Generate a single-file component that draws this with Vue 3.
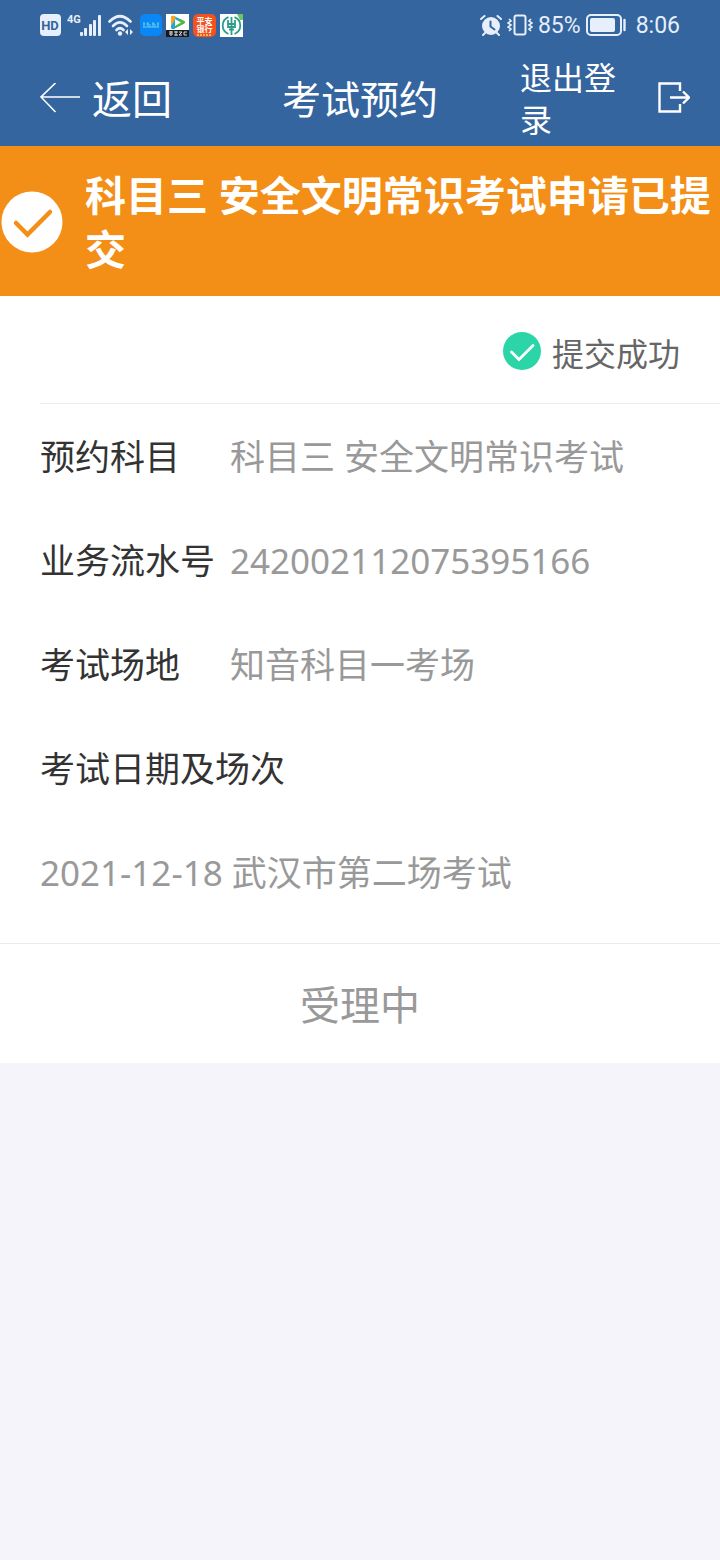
<template>
  <div class="page">
    <header class="top">
      <div class="status-bar">
        <div class="status-left">
          <svg class="hd" width="21" height="22" viewBox="0 0 21 22">
            <rect width="21" height="22" rx="4" fill="#e6effb" />
            <text x="10" y="16" text-anchor="middle" font-size="13" font-weight="700" fill="#34659f">HD</text>
          </svg>
          <svg width="35" height="24" viewBox="0 0 35 24">
            <text x="0" y="10" font-size="11" font-weight="700" fill="#e6effb">4G</text>
            <g fill="#e6effb">
              <rect x="13" y="19" width="3" height="4" rx="1" />
              <rect x="17" y="15" width="3" height="8" rx="1" />
              <rect x="22" y="11" width="3" height="12" rx="1" />
              <rect x="26" y="7" width="3" height="16" rx="1" />
              <rect x="31" y="2" width="3" height="21" rx="1" />
            </g>
          </svg>
          <svg width="26" height="24" viewBox="0 0 26 24">
            <g fill="none" stroke="#e6effb" stroke-width="2.6" stroke-linecap="round">
              <path d="M1.500 8.500Q12 -2 22.500 8.500" />
              <path d="M5 13Q12 6 19 13" />
              <path d="M8.500 17Q12 13.500 15.500 17" />
            </g>
            <circle cx="12" cy="20.500" r="2.200" fill="#e6effb" />
            <path d="M20 16v6l-3-3zM22 16v6l3-3z" fill="#e6effb" />
          </svg>
          <div class="apps">
            <svg width="22" height="22" viewBox="0 0 22 22">
              <rect width="22" height="22" rx="5" fill="#0b86f5" />
              <path d="M3 10h2m1 0h3m3 0h3m2 0h2M4 8v5m4-5v5m2-3v3m3-5v5m2-3v3m3-5v5M3 13h16" fill="none" stroke="#5fd0e6" stroke-width="1" />
            </svg>
            <svg width="23" height="23" viewBox="0 0 23 23">
              <rect width="23" height="23" fill="#fff" />
              <path d="M5 4Q5 1 8 2L18 7Q20 8 18 9.500L8 15Q5 16 5 13z" fill="#19a5e8" />
              <path d="M5 4Q5 1 8 2L10 3 7 9 5 12z" fill="#f7a51b" />
              <path d="M7 15L18 9.500Q20 8 18 7L14 5z" fill="#55b830" />
              <path d="M9 5l6 3.500-6 3.500z" fill="#fff" />
              <rect y="16" width="23" height="7" fill="#17191f" />
              <path d="M3 18h4M3 20h4M5 17v5M8 18h4M8 21h4M10 17v5M13 18h3l-3 3h3M18 18h3M18 21h3M18 18v3" fill="none" stroke="#d9d9d9" stroke-width="1" />
            </svg>
            <svg width="23" height="23" viewBox="0 0 23 23">
              <rect width="23" height="23" rx="5" fill="#f4511e" />
              <text x="11.500" y="10" text-anchor="middle" font-size="8" font-weight="700" fill="#fff">平安</text>
              <text x="11.500" y="18" text-anchor="middle" font-size="8" font-weight="700" fill="#fff">银行</text>
              <path d="M4 21h15" stroke="#ffb347" stroke-width="2" stroke-dasharray="2 1" />
            </svg>
            <svg width="23" height="23" viewBox="0 0 23 23">
              <rect width="23" height="23" fill="#fff" />
              <g fill="none" stroke="#2f9c8b" stroke-width="1.800">
                <path d="M8.500 20A9 9 0 0 1 8.500 3.200M14.500 3.200A9 9 0 0 1 14.500 20" />
                <path d="M11.500 3v18M8 6v7h7V6M8 10h7M9 15.500h5" />
              </g>
              <path d="M17 0h6v6h-3z" fill="#67c85e" />
            </svg>
          </div>
        </div>
        <div class="status-right">
          <svg width="22" height="22" viewBox="0 0 22 22">
            <circle cx="11" cy="12" r="9" fill="#e6effb" />
            <path d="M1 5L4.500 2M21 5L17.500 2M5 19l-2 2M17 19l2 2" stroke="#e6effb" stroke-width="2" stroke-linecap="round" />
            <path d="M10.500 7.500v5l4 3" fill="none" stroke="#34659f" stroke-width="2" stroke-linecap="round" />
          </svg>
          <svg width="26" height="22" viewBox="0 0 26 22">
            <rect x="7.500" y="1.500" width="11" height="19" rx="2" fill="none" stroke="#e6effb" stroke-width="2" />
            <path d="M2 5l2 2-3 2 3 2-3 2 3 2-2 2M24 5l-2 2 3 2-3 2 3 2-3 2 2 2" fill="none" stroke="#e6effb" stroke-width="1.600" />
          </svg>
          <span>85%</span>
          <svg width="41" height="22" viewBox="0 0 41 22">
            <rect x="1" y="1" width="34" height="20" rx="4" fill="none" stroke="#e6effb" stroke-width="2" />
            <rect x="4" y="4" width="25" height="14" rx="2" fill="#e6effb" />
            <path d="M38.500 6v10" stroke="#e6effb" stroke-width="2.400" stroke-linecap="round" />
          </svg>
          <span class="clock">8:06</span>
        </div>
      </div>
      <nav class="nav">
        <button type="button" class="back">
          <svg width="40" height="32" viewBox="0 0 40 32">
            <path d="M40 14H1M15.500 0L1 14l14.500 15" fill="none" stroke="#fff" stroke-width="1.600" />
          </svg>
          <span>返回</span>
        </button>
        <h1>考试预约</h1>
        <button type="button" class="logout">
          <span>退出登录</span>
          <svg width="34" height="36" viewBox="0 0 34 36">
            <path d="M24 10V2.500H3.500v28H24V23" fill="none" stroke="#fff" stroke-width="2.400" />
            <path d="M14 16.500h19M27 10.500l6 6-6 6" fill="none" stroke="#fff" stroke-width="2.400" />
          </svg>
        </button>
      </nav>
    </header>

    <section class="banner">
      <svg width="62" height="62" viewBox="0 0 62 62">
        <circle cx="31" cy="31" r="30.500" fill="#fff" />
        <path d="M15 32l11.500 11.500L49 21" fill="none" stroke="#f38e17" stroke-width="4.500" stroke-linecap="round" />
      </svg>
      <h2>科目三 安全文明常识考试申请已提交</h2>
    </section>

    <main class="card">
      <div class="result">
        <svg width="40" height="40" viewBox="0 0 40 40">
          <circle cx="20" cy="19" r="19" fill="#2cd5a8" />
          <path d="M9.500 20l7.500 7.500L31 13.500" fill="none" stroke="#fff" stroke-width="2.800" stroke-linecap="round" />
        </svg>
        <span>提交成功</span>
      </div>
      <dl class="details">
        <div v-for="item in details" :key="item.label" class="row">
          <dt>{{ item.label }}</dt>
          <dd>{{ item.value }}</dd>
        </div>
        <dt>考试日期及场次</dt>
        <dd>2021-12-18 武汉市第二场考试</dd>
      </dl>
      <div class="state">受理中</div>
    </main>
  </div>
</template>

<script setup>
const details = [
  { label: '预约科目', value: '科目三 安全文明常识考试' },
  { label: '业务流水号', value: '242002112075395166' },
  { label: '考试场地', value: '知音科目一考场' }
]
</script>

<style>
body {
  background: #f4f4fa;
}
</style>

<style scoped>
.page {
  font-family: "Noto Sans", "Noto Sans CJK SC", sans-serif;
  color: #333;
}

svg {
  display: block;
  flex-shrink: 0;
}

h1, h2, dl, dd {
  margin: 0;
}

button {
  padding: 0;
  border: 0;
  background: none;
  color: inherit;
  font-family: inherit;
  text-align: left;
  cursor: pointer;
}

.top {
  background: #34659f;
  color: #fff;
}

.status-bar {
  display: flex;
  justify-content: space-between;
  align-items: center;
  height: 50px;
  padding: 0 40px;
  font-family: Roboto, "Noto Sans CJK SC", sans-serif;
  font-size: 23px;
  color: #e6effb;
}

.status-left, .status-right {
  display: flex;
  align-items: center;
  gap: 5px;
}

.status-left {
  gap: 6px;
}

.apps {
  display: flex;
  align-items: center;
  gap: 4px;
}

.clock {
  margin-left: 4px;
}

.nav {
  display: grid;
  grid-template-columns: 1fr auto 1fr;
  align-items: center;
  height: 96px;
  padding: 2px 30px 0;
  box-sizing: border-box;
}

.nav h1 {
  font-size: 39px;
  font-weight: 400;
  line-height: 54px;
}

.back {
  display: flex;
  align-items: center;
  gap: 12px;
  padding-left: 10px;
  font-size: 40px;
  line-height: 54px;
}

.logout {
  display: flex;
  align-items: center;
  justify-self: end;
  gap: 40px;
  font-size: 32px;
  line-height: 42px;
}

.logout span {
  width: 3em;
}

.banner {
  display: flex;
  align-items: center;
  gap: 22px;
  padding: 22px 0 20px 1px;
  background: #f38e17;
  color: #fff;
}

.banner h2 {
  font-size: 41px;
  line-height: 54px;
}

.card {
  background: #fff;
}

.result {
  display: flex;
  align-items: center;
  justify-content: flex-end;
  gap: 10px;
  height: 108px;
  margin-left: 40px;
  padding-right: 40px;
  padding-top: 4px;
  box-sizing: border-box;
  border-bottom: 1px solid #ebebeb;
  font-size: 32px;
  color: #666;
}

.details {
  padding: 1px 40px 18px;
  border-bottom: 1px solid #ebebeb;
  font-size: 35px;
  line-height: 104px;
}

.row {
  display: flex;
}

.row dt {
  flex: 0 0 190px;
  white-space: nowrap;
}

dd {
  color: #999;
}

.state {
  padding: 34px 0 31px;
  font-size: 40px;
  line-height: 54px;
  text-align: center;
  color: #999;
}
</style>
